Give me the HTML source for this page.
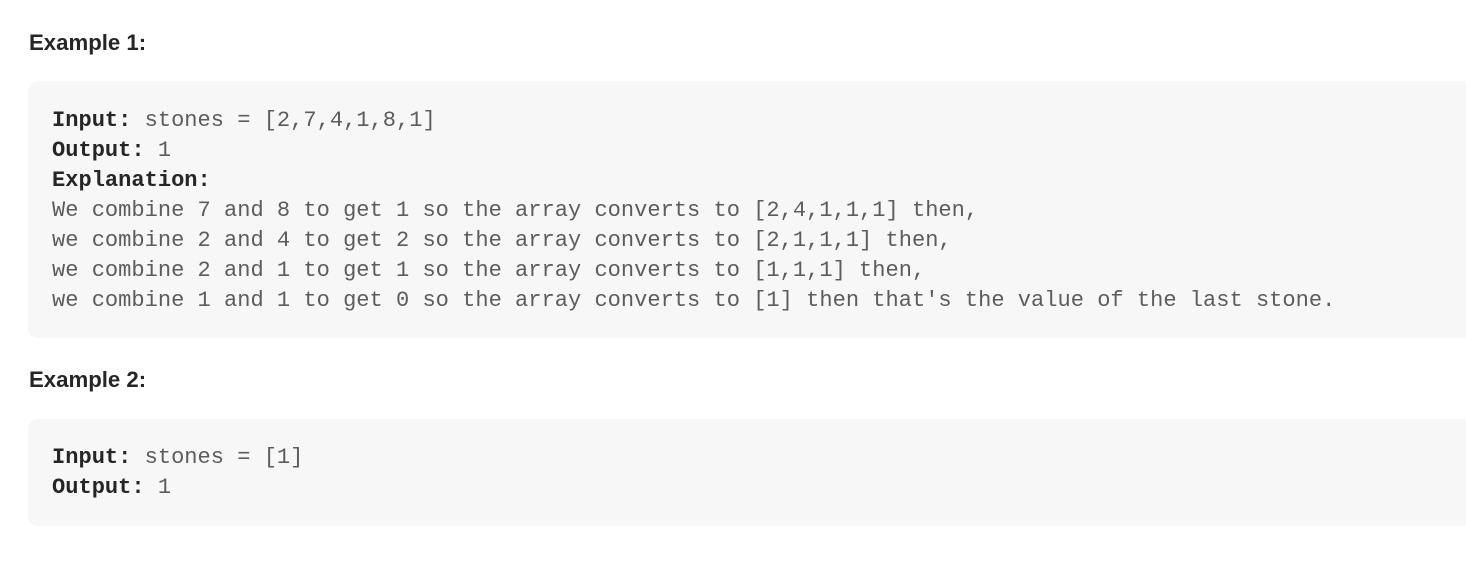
<!DOCTYPE html>
<html><head><meta charset="utf-8"><style>
html,body{margin:0;padding:0;background:#fff;width:1466px;height:566px;overflow:hidden}
h3{position:absolute;left:29px;margin:0;font:bold 22.2px/1 "Liberation Sans",sans-serif;color:#262626}
pre{position:absolute;left:28px;width:1460px;margin:0;background:#f7f7f8;border-radius:10px;box-sizing:border-box;padding:0 0 0 24px;font:22.05px/30px "Liberation Mono",monospace;color:#5c5c5c}
b{color:#262626}
</style></head><body>
<h3 style="top:32px">Example 1:</h3>
<pre style="top:81px;height:257px;padding-top:25px"><b>Input:</b> stones = [2,7,4,1,8,1]
<b>Output:</b> 1
<b>Explanation:</b>
We combine 7 and 8 to get 1 so the array converts to [2,4,1,1,1] then,
we combine 2 and 4 to get 2 so the array converts to [2,1,1,1] then,
we combine 2 and 1 to get 1 so the array converts to [1,1,1] then,
we combine 1 and 1 to get 0 so the array converts to [1] then that's the value of the last stone.</pre>
<h3 style="top:369px">Example 2:</h3>
<pre style="top:419px;height:107px;padding-top:24px"><b>Input:</b> stones = [1]
<b>Output:</b> 1</pre>
</body></html>
